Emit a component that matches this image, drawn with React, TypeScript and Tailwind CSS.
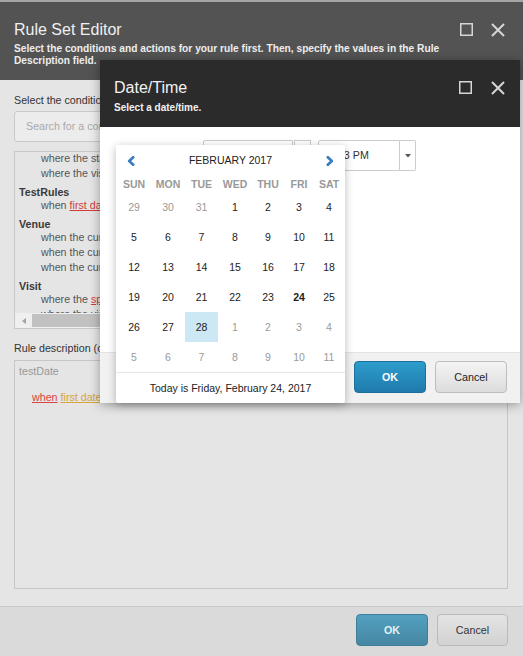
import React from "react";

function MaxIcon() {
  return (
    <svg width="13" height="13" viewBox="0 0 13 13" fill="none">
      <rect x="0.75" y="0.75" width="11.5" height="11.5" stroke="#d6d6d6" strokeWidth="1.5" />
    </svg>
  );
}

function CloseIcon() {
  return (
    <svg width="14" height="14" viewBox="0 0 14 14" fill="none">
      <path d="M1 1L13 13M13 1L1 13" stroke="#d6d6d6" strokeWidth="2" />
    </svg>
  );
}

function Chevron({ dir }: { dir: "left" | "right" }) {
  return (
    <svg width="8" height="10" viewBox="0 0 8 10" fill="none">
      {dir === "left" ? (
        <path d="M6.2 1.2L2.2 5L6.2 8.8" stroke="#3a7bbd" strokeWidth="2.6" strokeLinecap="round" strokeLinejoin="round" />
      ) : (
        <path d="M1.8 1.2L5.8 5L1.8 8.8" stroke="#3a7bbd" strokeWidth="2.6" strokeLinecap="round" strokeLinejoin="round" />
      )}
    </svg>
  );
}

type Day = { d: number; other?: boolean; bold?: boolean; sel?: boolean };

const weeks: Day[][] = [
  [{ d: 29, other: true }, { d: 30, other: true }, { d: 31, other: true }, { d: 1 }, { d: 2 }, { d: 3 }, { d: 4 }],
  [{ d: 5 }, { d: 6 }, { d: 7 }, { d: 8 }, { d: 9 }, { d: 10 }, { d: 11 }],
  [{ d: 12 }, { d: 13 }, { d: 14 }, { d: 15 }, { d: 16 }, { d: 17 }, { d: 18 }],
  [{ d: 19 }, { d: 20 }, { d: 21 }, { d: 22 }, { d: 23 }, { d: 24, bold: true }, { d: 25 }],
  [{ d: 26 }, { d: 27 }, { d: 28, sel: true }, { d: 1, other: true }, { d: 2, other: true }, { d: 3, other: true }, { d: 4, other: true }],
  [{ d: 5, other: true }, { d: 6, other: true }, { d: 7, other: true }, { d: 8, other: true }, { d: 9, other: true }, { d: 10, other: true }, { d: 11, other: true }],
];

const dayNames = ["SUN", "MON", "TUE", "WED", "THU", "FRI", "SAT"];

function Item({ children }: { children: React.ReactNode }) {
  return (
    <div className="h-[15px] leading-[15px] whitespace-nowrap pl-[26px] text-[10.7px] text-[#555]">{children}</div>
  );
}

function Heading({ children }: { children: React.ReactNode }) {
  return (
    <div className="mt-[6px] h-[11px] leading-[11px] whitespace-nowrap pl-[4px] text-[10.7px] font-bold text-[#3a3a3a]">
      {children}
    </div>
  );
}

function Calendar() {
  return (
    <div className="absolute left-[16px] top-[85px] w-[229px] h-[258px] bg-white rounded-[2px] shadow-[0_2px_8px_rgba(0,0,0,0.28)] flex flex-col">
      <div className="h-[31px] pt-[1px] px-[11px] flex items-center justify-between">
        <Chevron dir="left" />
        <span className="text-[10.5px] text-[#222]">FEBRUARY 2017</span>
        <Chevron dir="right" />
      </div>
      <div className="pl-[1px] grid grid-cols-[34px_34px_33px_34px_32px_30px_30px]">
        {dayNames.map((n) => (
          <div key={n} className="h-[16px] leading-[16px] text-center text-[10.5px] font-bold text-[#999]">
            {n}
          </div>
        ))}
        {weeks.map((w, i) =>
          w.map((day, j) => (
            <div
              key={`${i}-${j}`}
              className={`h-[30px] leading-[30px] text-center text-[10.5px] ${
                day.other ? "text-[#9a9a9a]" : "text-[#222]"
              } ${day.bold ? "font-bold" : ""} ${day.sel ? "bg-[#cde8f5]" : ""}`}
            >
              {day.d}
            </div>
          ))
        )}
      </div>
      <div className="mt-auto border-t border-[#e6e6e6] h-[31px] leading-[30px] text-center text-[10.5px] text-[#222]">
        Today is Friday, February 24, 2017
      </div>
    </div>
  );
}

function DateTimeDialog() {
  return (
    <div className="absolute left-[100px] top-[60px] w-[420px] h-[343px] flex flex-col shadow-[0_2px_10px_rgba(0,0,0,0.35)]">
      <div className="h-[67px] bg-[#2b2b2b] flex justify-between pl-[14px] pr-[15px]">
        <div className="pt-[18px]">
          <div className="text-[16px] leading-[20px] text-[#f2f2f2]">Date/Time</div>
          <div className="mt-[3.5px] text-[10px] leading-[12px] font-bold text-[#f2f2f2]">Select a date/time.</div>
        </div>
        <div className="flex items-start gap-[19px] pt-[21px]">
          <MaxIcon />
          <CloseIcon />
        </div>
      </div>
      <div className="flex-1 bg-white">
        <div className="flex pt-[13px] pl-[103px]">
          <div className="w-[90px] h-[32px] border border-[#cccccc] rounded-l-[2px] bg-white" />
          <div className="ml-[1px] w-[17px] h-[32px] border border-[#cccccc] bg-white" />
          <div className="ml-[7px] w-[82px] h-[31px] border border-[#cccccc] rounded-l-[2px] bg-white pl-[10px] flex items-center text-[10.7px] text-[#333] whitespace-nowrap">
            2:33 PM
          </div>
          <div className="w-[16px] h-[31px] border border-l-0 border-[#cccccc] rounded-r-[2px] bg-white flex items-center justify-center">
            <svg width="6" height="4" viewBox="0 0 6 4">
              <path d="M0 0H6L3 3.5Z" fill="#555" />
            </svg>
          </div>
        </div>
      </div>
      <div className="h-[51px] bg-[#f1f1f1] border-t border-[#e3e3e3] flex justify-end items-start gap-[9px] pt-[8px] pr-[13px]">
        <button className="w-[72px] h-[32px] rounded-[4px] border border-[#1c6f9b] bg-gradient-to-b from-[#2d9dcc] to-[#1f7bab] text-white text-[10.7px] font-bold">
          OK
        </button>
        <button className="w-[72px] h-[32px] rounded-[4px] border border-[#bdbdbd] bg-gradient-to-b from-[#f4f4f4] to-[#dcdcdc] text-[#222] text-[10.7px]">
          Cancel
        </button>
      </div>
      <Calendar />
    </div>
  );
}

export default function App() {
  return (
    <div className="relative w-[523px] h-[656px] overflow-hidden bg-[#a3a3a3] font-['Liberation_Sans',Arial,sans-serif]">
      <div className="h-[2px] bg-[#a5a5a5]" />
      <div className="flex flex-col h-[654px] w-[523px]">
        <div className="h-[78px] bg-[#535353] flex justify-between pl-[14px] pr-[18px]">
          <div className="pt-[18px]">
            <div className="text-[16px] leading-[20px] text-[#f0f0f0]">Rule Set Editor</div>
            <div className="mt-[2.5px] w-[430px] text-[10.2px] leading-[12.5px] font-bold text-[#ededed]">
              Select the conditions and actions for your rule first. Then, specify the values in the Rule Description field.
            </div>
          </div>
          <div className="flex items-start gap-[18px] pt-[21px]">
            <MaxIcon />
            <CloseIcon />
          </div>
        </div>

        <div className="flex-1 bg-[#e5e5e5] pl-[14px] pr-[15px] pt-[14px] flex flex-col">
          <div className="text-[10.7px] leading-[13px] text-[#333]">
            Select the conditions for the rule:
          </div>
          <div className="mt-[4px] h-[31px] border border-[#c9c9c9] rounded-[3px] bg-[#ececec] pl-[11px] flex items-center text-[10.7px] text-[#a9a9a9]">
            Search for a condition
          </div>
          <div className="mt-[9px] h-[178px] border border-[#c8c8c8] flex flex-col">
            <div className="flex-1 overflow-hidden">
              <div className="-mt-[1px]">
                <Item>where the stage of the visit compares to value</Item>
                <Item>where the visit number compares to number</Item>
                <Heading>TestRules</Heading>
                <Item>
                  when <span className="text-[#d33a3a] underline">first date</span> compares to value
                </Item>
                <Heading>Venue</Heading>
                <Item>when the current venue is the value</Item>
                <Item>when the current date is within the event</Item>
                <Item>when the current user is registered</Item>
                <Heading>Visit</Heading>
                <Item>
                  where the <span className="text-[#d33a3a] underline">specific</span> page was visited
                </Item>
                <Item>where the visit has a specific goal</Item>
              </div>
            </div>
            <div className="h-[15px] bg-[#efefef] flex items-center">
              <div className="w-[17px] flex justify-center">
                <svg width="4" height="6" viewBox="0 0 4 6">
                  <path d="M4 0V6L0 3Z" fill="#a3a3a3" />
                </svg>
              </div>
              <div className="h-[13px] w-[220px] bg-[#c1c1c1]" />
            </div>
          </div>
          <div className="mt-[11.5px] text-[10.7px] leading-[14px] text-[#333] whitespace-nowrap">
            Rule description (click the underlined words to edit values):
          </div>
          <div className="mt-[5px] h-[229px] border border-[#c6c6c6] pl-[4px] pt-[3px]">
            <div className="text-[10.7px] leading-[14px] text-[#999]">testDate</div>
            <div className="mt-[12px] pl-[13px] text-[10.7px] leading-[14px] whitespace-nowrap">
              <span className="text-[#d9453d] underline">when</span>{" "}
              <span className="text-[#d6a43a] underline">first date</span>
            </div>
          </div>
        </div>

        <div className="h-[50px] bg-[#dadada] border-t border-[#c9c9c9] flex justify-end items-start gap-[9px] pt-[7px] pr-[15px]">
          <button className="w-[72px] h-[32px] rounded-[4px] border border-[#3f7e99] bg-gradient-to-b from-[#53a1c1] to-[#4586a2] text-[#e4f1f6] text-[10.7px] font-bold">
            OK
          </button>
          <button className="w-[71px] h-[32px] rounded-[4px] border border-[#bababa] bg-gradient-to-b from-[#e4e4e4] to-[#d2d2d2] text-[#333] text-[10.7px]">
            Cancel
          </button>
        </div>
      </div>
      <DateTimeDialog />
    </div>
  );
}
